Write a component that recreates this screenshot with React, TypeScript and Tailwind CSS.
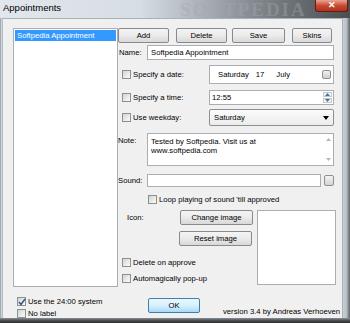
import React from "react";

function Check({ checked = false }: { checked?: boolean }) {
  return (
    <span className="relative w-[9px] h-[9px] shrink-0 border border-[#8e8f8f] bg-gradient-to-br from-[#d2d4d6] to-[#fbfbfb] flex items-center justify-center">
      {checked && (
        <svg width="8" height="8" viewBox="0 0 8 8" className="absolute">
          <path d="M1 4 L3 6.5 L7 1" fill="none" stroke="#3a4f8a" strokeWidth="1.4" />
        </svg>
      )}
    </span>
  );
}

function CheckRow({ label, checked = false }: { label: string; checked?: boolean }) {
  return (
    <div className="flex items-center gap-[2px] h-[9px]">
      <Check checked={checked} />
      <span className="leading-none whitespace-nowrap">{label}</span>
    </div>
  );
}

function Btn({ label, w, className = "" }: { label: string; w: string; className?: string }) {
  return (
    <div
      className={`${w} h-[15px] shrink-0 rounded-[2px] border border-[#8a8a8a] bg-gradient-to-b from-[#f4f4f4] via-[#ebebeb] to-[#d8d8d8] flex items-center justify-center leading-none text-black ${className}`}
    >
      {label}
    </div>
  );
}

export default function App() {
  return (
    <div className="w-[350px] h-[323px] overflow-hidden flex flex-col font-['Liberation_Sans',Arial,sans-serif] text-[7.7px] text-black bg-[#f0f0f0]">
      {/* title bar */}
      <div className="relative h-[18px] shrink-0 bg-[linear-gradient(to_right,#e1e7ec_0%,#d6dde3_40%,#a9b0b6_58%,#767c81_78%,#4a4e51_100%)]">
        <span className="absolute left-[3px] top-[2px] text-[9.5px] leading-[11px]">Appointments</span>
        <span className="absolute left-[180px] top-[-4px] text-[19px] font-bold tracking-[2px] font-['Liberation_Serif',serif] text-[#a3a9ae] opacity-40">
          SOFTPEDIA
        </span>
        <div className="absolute left-[315px] top-0 w-[33px] h-[12px] rounded-b-[3px] border border-[#6b1a10] border-t-0 bg-gradient-to-b from-[#e8a493] via-[#c94a33] to-[#b0301c] flex items-center justify-center">
          <span className="text-white text-[9px] font-bold leading-none">✕</span>
        </div>
      </div>

      <div className="flex h-[300px] shrink-0">
        {/* left frame */}
        <div className="w-[3px] shrink-0 bg-gradient-to-r from-[#8d969e] via-[#cdd4da] to-[#aab2b9]" />

        {/* client */}
        <div className="flex-1 border-t border-[#a9b0b6] bg-[#f0f0f0] flex pt-[9px] pl-[10px]">
          {/* left column */}
          <div className="w-[105px] shrink-0 flex flex-col">
            <div className="h-[259px] border border-[#abadb3] bg-white p-[1px]">
              <div className="h-[11px] bg-[#3399ff] text-white flex items-center pl-[2px] leading-none">
                Softpedia Appointment
              </div>
            </div>
            <div className="mt-[10px] pl-[4px]">
              <CheckRow label="Use the 24:00 system" checked />
            </div>
            <div className="mt-[3px] pl-[4px]">
              <CheckRow label="No label" />
            </div>
          </div>

          {/* right column */}
          <div className="w-[218px] shrink-0 flex flex-col">
            {/* buttons */}
            <div className="flex">
              <Btn label="Add" w="w-[51px]" />
              <Btn label="Delete" w="w-[51px]" className="ml-[7px]" />
              <Btn label="Save" w="w-[53px]" className="ml-[5px]" />
              <Btn label="Skins" w="w-[40px]" className="ml-[7px]" />
            </div>

            {/* name */}
            <div className="flex items-center mt-[2px] h-[15px]">
              <span className="w-[29px] pl-[1px]">Name:</span>
              <div className="w-[187px] h-full border border-[#abadb3] bg-white flex items-center pl-[3px]">
                Softpedia Appointment
              </div>
            </div>

            {/* date */}
            <div className="flex items-center mt-[5px] h-[19px]">
              <div className="w-[91px] pl-[4px]">
                <CheckRow label="Specify a date:" />
              </div>
              <div className="w-[125px] h-full border border-[#abadb3] bg-white flex items-center relative">
                <span className="ml-[8px]">Saturday</span>
                <span className="ml-[7px]">17</span>
                <span className="ml-[12px]">July</span>
                <span className="absolute right-[2px] top-[4px] w-[9px] h-[9px] rounded-[2px] border border-[#8e8f8f] bg-gradient-to-b from-[#f0f0f0] to-[#cfcfcf]" />
              </div>
            </div>

            {/* time */}
            <div className="flex items-center mt-[6px] h-[15px]">
              <div className="w-[91px] pl-[4px]">
                <CheckRow label="Specify a time:" />
              </div>
              <div className="w-[125px] h-full border border-[#abadb3] bg-white flex items-center relative pl-[2px]">
                12:55
                <div className="absolute right-[1px] top-[1px] bottom-[1px] w-[9px] flex flex-col gap-[1px]">
                  <div className="flex-1 border border-[#c5c9ce] bg-[#f3f5f7] flex items-center justify-center">
                    <svg width="5" height="3" viewBox="0 0 5 3"><path d="M0 3 L2.5 0 L5 3Z" fill="#4b6e9a" /></svg>
                  </div>
                  <div className="flex-1 border border-[#c5c9ce] bg-[#f3f5f7] flex items-center justify-center">
                    <svg width="5" height="3" viewBox="0 0 5 3"><path d="M0 0 L2.5 3 L5 0Z" fill="#4b6e9a" /></svg>
                  </div>
                </div>
              </div>
            </div>

            {/* weekday */}
            <div className="flex items-center mt-[4px] h-[17px]">
              <div className="w-[91px] pl-[4px]">
                <CheckRow label="Use weekday:" />
              </div>
              <div className="w-[125px] h-full border border-[#8e8f8f] rounded-[2px] bg-gradient-to-b from-[#fbfbfb] to-[#ececec] flex items-center relative pl-[4px]">
                Saturday
                <svg width="6" height="4" viewBox="0 0 6 4" className="absolute right-[4px] top-[6px]">
                  <path d="M0 0 L6 0 L3 4Z" fill="#000" />
                </svg>
              </div>
            </div>

            {/* note */}
            <div className="flex mt-[7px] h-[33px]">
              <span className="w-[29px] pt-[2px]">Note:</span>
              <div className="w-[187px] h-full border border-[#abadb3] bg-white flex">
                <div className="flex-1 pl-[3px] pt-[3px] leading-[9px]">
                  Tested by Softpedia. Visit us at
                  <br />
                  www.softpedia.com
                </div>
                <div className="w-[10px] flex flex-col justify-between items-center py-[4px]">
                  <svg width="5" height="3" viewBox="0 0 5 3"><path d="M0 3 L2.5 0 L5 3Z" fill="#b5b5b5" /></svg>
                  <svg width="5" height="3" viewBox="0 0 5 3"><path d="M0 0 L2.5 3 L5 0Z" fill="#b5b5b5" /></svg>
                </div>
              </div>
            </div>

            {/* sound */}
            <div className="flex items-center mt-[8px] h-[13px]">
              <span className="w-[29px]">Sound:</span>
              <div className="w-[174px] h-full border border-[#abadb3] bg-white" />
              <div className="ml-[3px] w-[10px] h-[11px] rounded-[2px] border border-[#8e8f8f] bg-gradient-to-b from-[#f4f4f4] to-[#d4d4d4]" />
            </div>

            {/* loop */}
            <div className="mt-[8px] pl-[30px]">
              <CheckRow label="Loop playing of sound 'till approved" />
            </div>

            {/* icon area */}
            <div className="flex mt-[6px] h-[75px]">
              <div className="w-[139px] flex flex-col">
                <div className="flex items-center h-[15px]">
                  <span className="w-[62px] pl-[9px]">Icon:</span>
                  <Btn label="Change image" w="w-[73px]" />
                </div>
                <div className="flex mt-[6px] pl-[61px]">
                  <Btn label="Reset image" w="w-[73px]" />
                </div>
                <div className="mt-[12px] pl-[4px]">
                  <CheckRow label="Delete on approve" />
                </div>
                <div className="mt-[7px] pl-[4px]">
                  <CheckRow label="Automagically pop-up" />
                </div>
              </div>
              <div className="w-[79px] h-full border border-[#abadb3] bg-white" />
            </div>

            {/* ok / version */}
            <div className="flex items-end mt-[13px]">
              <div className="ml-[30px] w-[52px] h-[15px] shrink-0 rounded-[2px] border border-[#3c7fb1] bg-gradient-to-b from-[#eaf6fd] via-[#d9f0fc] to-[#a7d9f5] flex items-center justify-center leading-none">
                OK
              </div>
              <span className="ml-[23px] leading-none mb-[-3px] whitespace-nowrap">version 3.4 by Andreas Verhoeven</span>
            </div>
          </div>
        </div>

        {/* right frame */}
        <div className="w-[8px] shrink-0 border-l border-[#a9b0b6] bg-gradient-to-r from-[#c9d0d6] via-[#b7bfc6] to-[#5d6266]" />
      </div>

      {/* bottom frame */}
      <div className="h-[5px] shrink-0 bg-gradient-to-b from-[#8b9298] via-[#4b4f52] to-[#2a2c2e]" />
    </div>
  );
}
